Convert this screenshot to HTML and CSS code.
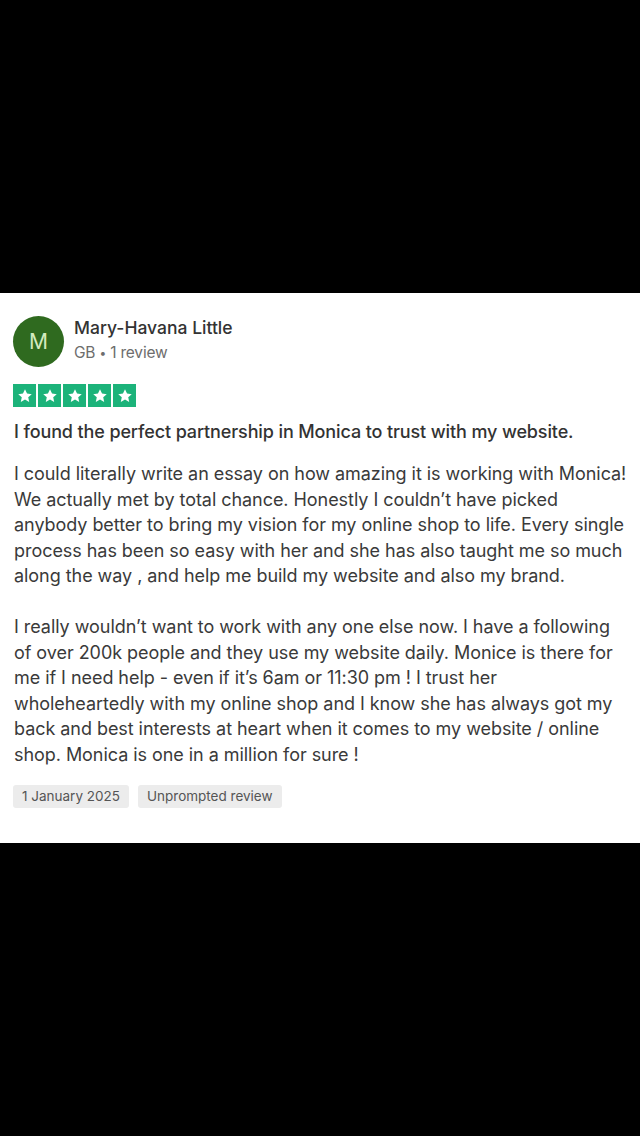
FILE: index.html
```html
<!DOCTYPE html>
<html>
<head>
<meta charset="utf-8">
<link rel="stylesheet" href="styles.css">
</head>
<body>
<div class="screen">
  <div class="black top"></div>
  <article class="card">
    <header class="reviewer">
      <div class="avatar">M</div>
      <div class="who">
        <div class="name">Mary-Havana Little</div>
        <div class="meta">GB <span class="dot">•</span> 1 review</div>
      </div>
    </header>
    <div class="stars">
      <span class="star"><svg viewBox="0 0 24 24"><path d="M12 3l2.7 5.8 6.3.7-4.7 4.3 1.3 6.2-5.6-3.2-5.6 3.2 1.3-6.2-4.7-4.3 6.3-.7z"/></svg></span>
      <span class="star"><svg viewBox="0 0 24 24"><path d="M12 3l2.7 5.8 6.3.7-4.7 4.3 1.3 6.2-5.6-3.2-5.6 3.2 1.3-6.2-4.7-4.3 6.3-.7z"/></svg></span>
      <span class="star"><svg viewBox="0 0 24 24"><path d="M12 3l2.7 5.8 6.3.7-4.7 4.3 1.3 6.2-5.6-3.2-5.6 3.2 1.3-6.2-4.7-4.3 6.3-.7z"/></svg></span>
      <span class="star"><svg viewBox="0 0 24 24"><path d="M12 3l2.7 5.8 6.3.7-4.7 4.3 1.3 6.2-5.6-3.2-5.6 3.2 1.3-6.2-4.7-4.3 6.3-.7z"/></svg></span>
      <span class="star"><svg viewBox="0 0 24 24"><path d="M12 3l2.7 5.8 6.3.7-4.7 4.3 1.3 6.2-5.6-3.2-5.6 3.2 1.3-6.2-4.7-4.3 6.3-.7z"/></svg></span>
    </div>
    <h2 class="title">I found the perfect partnership in Monica to trust with my website.</h2>
    <p class="body">I could literally write an essay on how amazing it is working with Monica! We actually met by total chance. Honestly I couldn’t have picked anybody better to bring my vision for my online shop to life. Every single process has been so easy with her and she has also taught me so much along the way , and help me build my website and also my brand.</p>
    <p class="body">I really wouldn’t want to work with any one else now. I have a following of over 200k people and they use my website daily. Monice is there for me if I need help - even if it’s 6am or 11:30 pm ! I trust her wholeheartedly with my online shop and I know she has always got my back and best interests at heart when it comes to my website / online shop. Monica is one in a million for sure !</p>
    <div class="tags">
      <span class="tag">1 January 2025</span>
      <span class="tag">Unprompted review</span>
    </div>
  </article>
  <div class="black bottom"></div>
</div>
</body>
</html>
```
FILE: styles.css
```css
html, body {
  margin: 0;
  padding: 0;
  background: #000;
}
.screen {
  width: 640px;
  height: 1136px;
  display: flex;
  flex-direction: column;
  background: #000;
  font-family: Inter, "Noto Sans", sans-serif;
  color: #363636;
}
.top { height: 293px; flex: none; }
.bottom { flex: 1; }
.card {
  height: 550px;
  box-sizing: border-box;
  background: #fff;
  padding: 23px 12px 0 14px;
  display: flex;
  flex-direction: column;
}
.reviewer {
  display: flex;
  align-items: center;
  gap: 10px;
  margin-left: -1px;
}
.avatar {
  width: 51px;
  height: 51px;
  border-radius: 50%;
  background: #2f6a1f;
  color: #d3eabf;
  font-size: 21px;
  font-weight: 400;
  display: flex;
  align-items: center;
  justify-content: center;
  flex: none;
}
.who {
  display: flex;
  flex-direction: column;
  gap: 5px;
  margin-top: -5px;
}
.name {
  font-size: 17.5px;
  font-weight: 500;
  color: #333;
  letter-spacing: 0;
}
.meta {
  font-size: 15.5px;
  color: #6d6d6d;
  letter-spacing: -0.2px;
}
.dot { font-size: 12px; position: relative; top: -1px; }
.stars {
  display: flex;
  gap: 2px;
  margin-top: 17px;
  margin-left: -1px;
}
.star {
  width: 23px;
  height: 23px;
  background: #1cb37a;
  display: flex;
  align-items: center;
  justify-content: center;
}
.star svg { width: 18px; height: 18px; fill: #fff; }
.title {
  margin: 13px 0 0 0;
  font-size: 18px;
  font-weight: 500;
  color: #333;
  line-height: 24px;
  letter-spacing: -0.12px;
}
.body {
  margin: 17px 0 0 0;
  font-size: 18px;
  line-height: 25.5px;
  color: #3a3a3a;
  letter-spacing: -0.05px;
}
.body + .body { margin-top: 25.5px; }
.tags {
  display: flex;
  gap: 9px;
  margin-top: 18px;
  margin-left: -1px;
}
.tag {
  background: #ececec;
  color: #555;
  font-size: 13.5px;
  padding: 3px 9px;
  border-radius: 3px;
  line-height: 17px;
}
```
